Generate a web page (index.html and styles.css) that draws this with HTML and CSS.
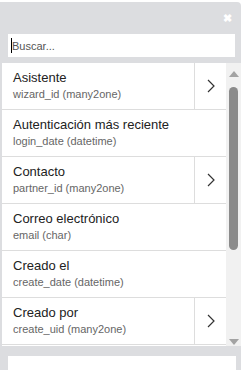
FILE: index.html
```html
<!DOCTYPE html>
<html>
<head>
    <meta charset="UTF-8">
    <link rel="stylesheet" href="styles.css">
</head>

<body>
    <div class="popover">
        <div class="header">
            <span class="close">&#10006;</span>
        </div>

        <div class="search">
            <span class="caret"></span><span class="placeholder">Buscar...</span>
        </div>

        <div class="fields">
            <ul class="list">
                <li class="field">
                    <div class="info">
                        <div class="name">Asistente</div>
                        <div class="tech">wizard_id (many2one)</div>
                    </div>
                    <button class="follow"><svg width="8" height="14" viewBox="0 0 8 14"><path d="M1 1l6 6-6 6" fill="none" stroke="#333" stroke-width="1.2"/></svg></button>
                </li>
                <li class="field">
                    <div class="info">
                        <div class="name">Autenticación más reciente</div>
                        <div class="tech">login_date (datetime)</div>
                    </div>
                </li>
                <li class="field">
                    <div class="info">
                        <div class="name">Contacto</div>
                        <div class="tech">partner_id (many2one)</div>
                    </div>
                    <button class="follow"><svg width="8" height="14" viewBox="0 0 8 14"><path d="M1 1l6 6-6 6" fill="none" stroke="#333" stroke-width="1.2"/></svg></button>
                </li>
                <li class="field">
                    <div class="info">
                        <div class="name">Correo electrónico</div>
                        <div class="tech">email (char)</div>
                    </div>
                </li>
                <li class="field">
                    <div class="info">
                        <div class="name">Creado el</div>
                        <div class="tech">create_date (datetime)</div>
                    </div>
                </li>
                <li class="field">
                    <div class="info">
                        <div class="name">Creado por</div>
                        <div class="tech">create_uid (many2one)</div>
                    </div>
                    <button class="follow"><svg width="8" height="14" viewBox="0 0 8 14"><path d="M1 1l6 6-6 6" fill="none" stroke="#333" stroke-width="1.2"/></svg></button>
                </li>
            </ul>

            <div class="scrollbar">
                <span class="arrow up"></span>
                <span class="thumb"></span>
                <span class="arrow down"></span>
            </div>
        </div>

        <div class="footer"></div>
    </div>
</body>
</html>
```

FILE: styles.css
```css
body {
    margin: 0;
    background: #fff;
    font-family: "Liberation Sans", Arial, sans-serif;
    overflow: hidden;
}

.popover {
    margin-top: 2px;
    width: 241px;
    height: 368px;
    background: #dcdde0;
    border-top-right-radius: 4px;
    display: flex;
    flex-direction: column;
}

.header {
    height: 32px;
    display: flex;
    justify-content: flex-end;
    align-items: center;
    padding-right: 9px;
}

.close {
    color: #fff;
    font-size: 11px;
    font-weight: bold;
    line-height: 1;
}

.search {
    height: 23px;
    margin: 0 6px 0 8px;
    background: #fff;
    display: flex;
    align-items: center;
    padding-left: 3px;
}

.caret {
    width: 1px;
    height: 15px;
    background: #000;
}

.placeholder {
    font-size: 11px;
    color: #555;
}

.fields {
    margin: 6px 0 0 2px;
    height: 283px;
    display: flex;
}

.list {
    list-style: none;
    margin: 0;
    padding: 0;
    width: 224px;
    background: #fff;
    overflow: hidden;
}

.field {
    height: 46px;
    border-bottom: 1px solid #ddd;
    display: flex;
}

.info {
    flex: 1;
    padding: 6px 0 0 11px;
}

.name {
    font-size: 13px;
    line-height: 18px;
    color: #222;
}

.tech {
    font-size: 11px;
    line-height: 14px;
    color: #666;
}

.follow {
    width: 32px;
    border: none;
    border-left: 1px solid #ddd;
    background: #fff;
    display: flex;
    align-items: center;
    justify-content: center;
    padding: 0;
}

.scrollbar {
    width: 15px;
    background: #f1f1f1;
    display: flex;
    flex-direction: column;
    align-items: center;
}

.arrow {
    width: 0;
    height: 0;
    border-left: 5px solid transparent;
    border-right: 5px solid transparent;
}

.arrow.up {
    margin-top: 8px;
    border-bottom: 6px solid #a3a3a3;
}

.arrow.down {
    margin-top: 89px;
    border-top: 6px solid #a3a3a3;
}

.thumb {
    margin-top: 10px;
    width: 9px;
    height: 163px;
    border-radius: 5px;
    background: #8b8b8b;
}

.footer {
    margin: 10px 5px 0 8px;
    flex: 1;
    background: #fff;
}
```
